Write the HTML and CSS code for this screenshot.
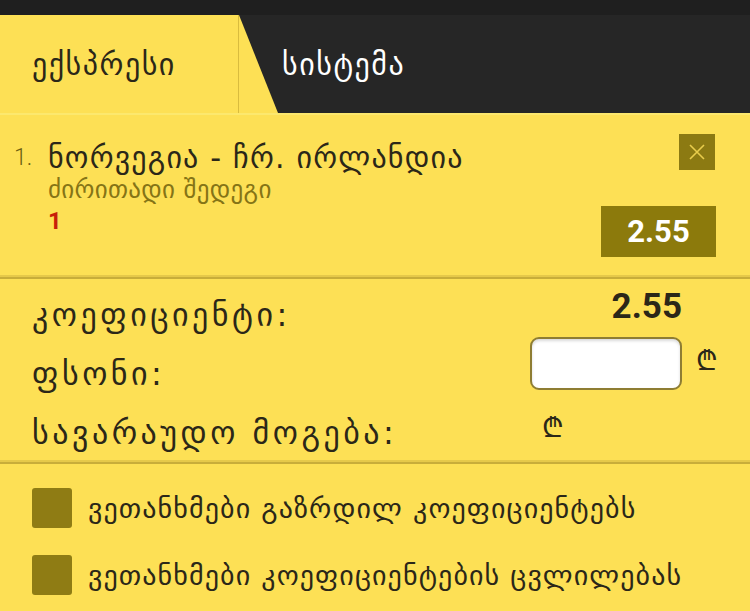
FILE: index.html
```html
<!DOCTYPE html>
<html lang="ka">
<head>
  <meta charset="UTF-8">
  <title>Betslip</title>
  <link rel="stylesheet" href="styles.css">
</head>
<body>

  <div class="topbar"></div>

  <div class="tabs">
    <div class="tab tab-active">ექსპრესი</div>
    <div class="tab tab-dark">სისტემა</div>
  </div>

  <div class="bet-item">
    <div class="bet-info">
      <span class="bet-num">1.</span>
      <div class="bet-text">
        <div class="bet-title">ნორვეგია - ჩრ. ირლანდია</div>
        <div class="bet-market">ძირითადი შედეგი</div>
        <div class="bet-pick">1</div>
      </div>
    </div>
    <div class="bet-side">
      <button class="close-btn">
        <svg width="20" height="20" viewBox="0 0 20 20"><path d="M3 3 L17 17 M17 3 L3 17" stroke="#e8cc4c" stroke-width="1.6" fill="none"/></svg>
      </button>
      <div class="odds-box">2.55</div>
    </div>
  </div>

  <div class="stake">
    <div class="stake-label">კოეფიციენტი:</div>
    <div class="stake-odds">2.55</div>
    <div></div>

    <div class="stake-label">ფსონი:</div>
    <input class="stake-input" type="text">
    <div class="lari">₾</div>

    <div class="stake-label">სავარაუდო მოგება:</div>
    <div class="lari lari-win">₾</div>
    <div></div>
  </div>

  <div class="options">
    <label class="option"><span class="check"></span>ვეთანხმები გაზრდილ კოეფიციენტებს</label>
    <label class="option"><span class="check"></span>ვეთანხმები კოეფიციენტების ცვლილებას</label>
  </div>

</body>
</html>
```

FILE: styles.css
```css
body {
  margin: 0;
  background: #fde055;
  font-family: "DejaVu Sans", "Noto Sans", sans-serif;
  color: #2b2718;
}

.topbar {
  height: 15px;
  background: #1f1f1f;
}

.tabs {
  display: flex;
  height: 98px;
  border-bottom: 2px solid #fce86e;
}

.tab {
  display: flex;
  align-items: center;
  font-size: 30px;
  letter-spacing: 1.5px;
}

.tab-active {
  width: 239px;
  padding-left: 32px;
  box-sizing: border-box;
  border-right: 1px solid #d9bc3e;
  color: #2b2718;
}

.tab-dark {
  flex: 1;
  padding-left: 43px;
  background: #262626;
  color: #fff;
  clip-path: polygon(0 0, 100% 0, 100% 100%, 39px 100%);
}

.bet-item {
  display: flex;
  justify-content: space-between;
  padding: 19px 34px 20px 14px;
  border-bottom: 2px solid #c8ad3a;
  box-shadow: 0 -2px 0 #e6c94a inset;
}

.bet-info {
  display: flex;
  align-items: flex-start;
  padding-top: 8px;
}

.bet-num {
  font-family: Roboto, sans-serif;
  font-weight: 300;
  font-size: 23px;
  line-height: 32px;
  color: #6d5f10;
  width: 34px;
}

.bet-title {
  font-size: 30px;
  line-height: 32px;
  letter-spacing: 1.2px;
}

.bet-market {
  font-size: 25px;
  line-height: 32px;
  letter-spacing: 0.3px;
  color: #857416;
}

.bet-pick {
  font-family: Roboto, sans-serif;
  font-weight: 700;
  font-size: 24px;
  line-height: 30px;
  color: #c81e0a;
}

.bet-side {
  display: flex;
  flex-direction: column;
  align-items: flex-end;
}

.close-btn {
  width: 36px;
  height: 36px;
  margin-right: 1px;
  border: none;
  padding: 0;
  background: #8c7a12;
  display: flex;
  align-items: center;
  justify-content: center;
}

.odds-box {
  width: 115px;
  height: 51px;
  margin-top: 36px;
  background: #8c7a0c;
  color: #fff;
  font-family: Roboto, sans-serif;
  font-weight: 700;
  font-size: 31px;
  display: flex;
  align-items: center;
  justify-content: center;
}

.stake {
  display: grid;
  grid-template-columns: 1fr 152px 68px;
  grid-auto-rows: 59px;
  align-items: center;
  padding: 6px 0 0 32px;
  border-bottom: 2px solid #c8ad3a;
  box-shadow: 0 -2px 0 #e6c94a inset;
}

.stake-label {
  font-size: 32px;
  letter-spacing: 3.5px;
}

.stake-odds {
  align-self: start;
  padding-top: 4px;
  text-align: right;
  font-family: Roboto, sans-serif;
  font-weight: 700;
  font-size: 35px;
  line-height: 35px;
}

.stake-input {
  align-self: start;
  margin-top: -7px;
  width: 152px;
  height: 53px;
  box-sizing: border-box;
  border: 2px solid #8e7d33;
  border-radius: 9px;
  background: #fff;
  box-shadow: inset 0 2px 3px rgba(0,0,0,0.15);
}

.lari {
  align-self: start;
  margin-top: -4px;
  padding-left: 14px;
  font-size: 28px;
}

.lari-win {
  margin-top: 0;
  padding-top: 4px;
  padding-left: 12px;
}

.options {
  padding: 24px 0 0 32px;
}

.option {
  display: flex;
  align-items: center;
  gap: 16px;
  height: 40px;
  margin-bottom: 27px;
  font-size: 28px;
  letter-spacing: 1.1px;
}

.check {
  width: 40px;
  height: 40px;
  border-radius: 3px;
  background: #8f7c14;
}
```
